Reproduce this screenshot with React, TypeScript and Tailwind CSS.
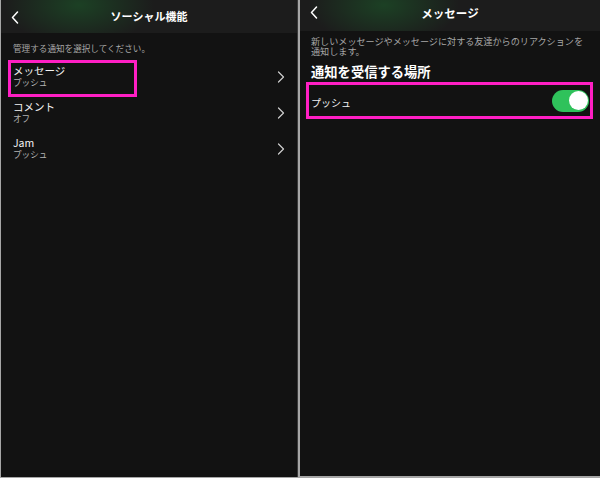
import React from "react";

const font = { fontFamily: '"Noto Sans CJK JP", "Noto Sans", sans-serif' };

function BackChevron() {
  return (
    <svg width="8" height="13" viewBox="0 0 8 13" fill="none">
      <path d="M6.5 1 L1.5 6.5 L6.5 12" stroke="#ffffff" strokeWidth="1.5" strokeLinecap="round" strokeLinejoin="round" />
    </svg>
  );
}

function RightChevron() {
  return (
    <svg width="8" height="12" viewBox="0 0 8 12" fill="none">
      <path d="M1.5 1 L6.5 6 L1.5 11" stroke="#cfcfcf" strokeWidth="1.2" strokeLinecap="round" strokeLinejoin="round" />
    </svg>
  );
}

function Row({ title, sub }: { title: string; sub: string }) {
  return (
    <div className="flex h-[36px] items-center justify-between pl-[12px] pr-[12px]">
      <div className="-mt-[2px] flex flex-col">
        <span className="text-[10.5px] leading-[12px] text-[#f2f2f2]">{title}</span>
        <span className="text-[8.6px] leading-[11px] text-[#b3b3b3]">{sub}</span>
      </div>
      <RightChevron />
    </div>
  );
}

export default function App() {
  return (
    <div className="flex h-[478px] w-[600px] bg-[#a6a6a6]" style={font}>
      <div className="ml-px flex h-[477px] w-[297px] flex-col border-r border-[#3a3a3a] bg-[#121212]">
        <div
          className="relative flex h-[33px] items-center justify-center bg-[#1c1c1c]"
          style={{ backgroundImage: "radial-gradient(ellipse 75px 40px at 78px 5px, rgba(28,80,40,0.7), rgba(28,28,28,0) 100%)" }}
        >
          <div className="absolute left-[10px] top-[11px]">
            <BackChevron />
          </div>
          <span className="text-[11px] font-bold text-white">ソーシャル機能</span>
        </div>
        <div className="whitespace-nowrap pl-[12px] pt-[9px] text-[8.6px] leading-[12px] text-[#a7a7a7]">管理する通知を選択してください。</div>
        <div className="relative pt-[5px]">
          <div className="absolute left-[7px] top-[6px] h-[37px] w-[129px] border-[3px] border-[#ff1fc4]" />
          <Row title="メッセージ" sub="プッシュ" />
          <Row title="コメント" sub="オフ" />
          <Row title="Jam" sub="プッシュ" />
        </div>
      </div>
      <div className="ml-[2px] flex h-[476px] flex-1 flex-col bg-[#121212]">
        <div
          className="relative flex h-[31px] items-center justify-center bg-[#1c1c1c] pb-[4px]"
          style={{ backgroundImage: "radial-gradient(ellipse 75px 40px at 84px 5px, rgba(28,80,40,0.7), rgba(28,28,28,0) 100%)" }}
        >
          <div className="absolute left-[10px] top-[6px]">
            <BackChevron />
          </div>
          <span className="text-[11.5px] font-bold text-white">メッセージ</span>
        </div>
        <div className="whitespace-nowrap px-[11px] pt-[5px] text-[9.1px] leading-[10px] text-[#a7a7a7]">
          新しいメッセージやメッセージに対する友達からのリアクションを
          <br />
          通知します。
        </div>
        <div className="whitespace-nowrap pl-[11px] pt-[8px] text-[13.3px] font-bold leading-[16px] text-white">通知を受信する場所</div>
        <div className="ml-[6px] mr-[7px] mt-[2px] flex h-[37px] items-center justify-between border-[3px] border-[#ff1fc4] pl-[2px] pr-[1px]">
          <span className="pt-[3px] text-[10px] text-[#f0f0f0]">プッシュ</span>
          <div className="flex h-[22px] w-[37px] items-center justify-end rounded-full bg-[#2fc25b] pr-[1.5px]">
            <div className="h-[19px] w-[19px] rounded-full bg-white" />
          </div>
        </div>
      </div>
    </div>
  );
}
